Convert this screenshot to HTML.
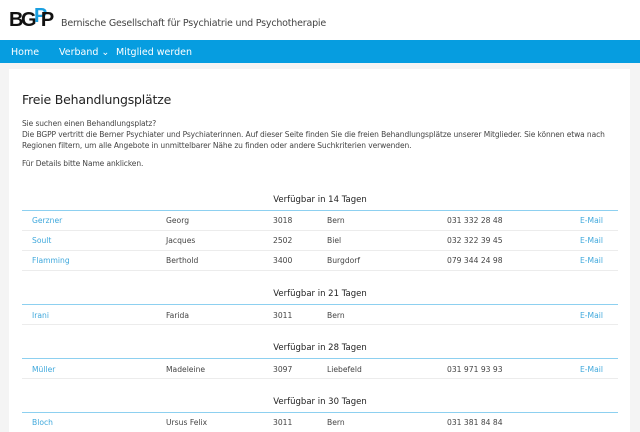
<!DOCTYPE html>
<html><head><meta charset="utf-8"><style>
*{margin:0;padding:0;box-sizing:border-box}
html,body{width:640px;height:432px;overflow:hidden}
body{background:#f4f4f4;font-family:"DejaVu Sans","Liberation Sans",sans-serif;color:#333;position:relative}
.hdr{position:absolute;left:0;top:0;width:640px;height:40px;background:#fff}
.logo{position:absolute;left:9px;top:9px;font:bold 20px "Liberation Sans",sans-serif;letter-spacing:-2.5px;color:#111}
.sub{position:absolute;left:61px;top:18px;font-size:9.5px;color:#444;letter-spacing:-.2px}
.nav{position:absolute;left:0;top:40px;width:640px;height:23px;background:#069de0;color:#fff;font-size:9.5px}
.nav span{position:absolute;top:7px}
.panel{position:absolute;left:9px;top:69px;width:621px;height:363px;background:#fff}
h1{position:absolute;left:22px;top:92px;font-size:12.5px;font-weight:normal;color:#222;letter-spacing:-.2px}
.p{position:absolute;left:22px;font-size:7.5px;color:#444;line-height:11px;letter-spacing:-.1px}
.hd{position:absolute;left:22px;width:596px;text-align:center;font-size:8.5px;color:#222}
.bl{position:absolute;left:22px;width:596px;height:1px;background:#8dd0f0}
.gl{position:absolute;left:22px;width:596px;height:1px;background:#ececec}
.r{position:absolute;font-size:7.6px;color:#444;margin-top:1px}
.l{color:#3fa8dc}
</style></head><body>
<div class="hdr"><div class="logo">BG<span style="color:#1a9fe0;position:relative;top:-4px">P</span><span style="position:relative;left:-4px">P</span></div>
<div class="sub">Bernische Gesellschaft für Psychiatrie und Psychotherapie</div></div>
<div class="nav"><span style="left:11px">Home</span><span style="left:59px">Verband ⌄</span><span style="left:116px">Mitglied werden</span></div>
<div class="panel"></div>
<h1>Freie Behandlungsplätze</h1>
<div class="p" style="top:118px">Sie suchen einen Behandlungsplatz?<br>Die BGPP vertritt die Berner Psychiater und Psychiaterinnen. Auf dieser Seite finden Sie die freien Behandlungsplätze unserer Mitglieder. Sie können etwa nach<br>Regionen filtern, um alle Angebote in unmittelbarer Nähe zu finden oder andere Suchkriterien verwenden.</div>
<div class="p" style="top:158px">Für Details bitte Name anklicken.</div>

<div class="hd" style="top:195px">Verfügbar in 14 Tagen</div><div class="bl" style="top:210px"></div>
<div class="r l" style="left:32px;top:215px">Gerzner</div><div class="r" style="left:166px;top:215px">Georg</div><div class="r" style="left:273px;top:215px">3018</div><div class="r" style="left:327px;top:215px">Bern</div><div class="r" style="left:447px;top:215px">031 332 28 48</div><div class="r l" style="left:580px;top:215px">E-Mail</div>
<div class="gl" style="top:230px"></div>
<div class="r l" style="left:32px;top:235px">Soult</div><div class="r" style="left:166px;top:235px">Jacques</div><div class="r" style="left:273px;top:235px">2502</div><div class="r" style="left:327px;top:235px">Biel</div><div class="r" style="left:447px;top:235px">032 322 39 45</div><div class="r l" style="left:580px;top:235px">E-Mail</div>
<div class="gl" style="top:250px"></div>
<div class="r l" style="left:32px;top:255px">Flamming</div><div class="r" style="left:166px;top:255px">Berthold</div><div class="r" style="left:273px;top:255px">3400</div><div class="r" style="left:327px;top:255px">Burgdorf</div><div class="r" style="left:447px;top:255px">079 344 24 98</div><div class="r l" style="left:580px;top:255px">E-Mail</div>
<div class="gl" style="top:270px"></div>

<div class="hd" style="top:289px">Verfügbar in 21 Tagen</div><div class="bl" style="top:304px"></div>
<div class="r l" style="left:32px;top:310px">Irani</div><div class="r" style="left:166px;top:310px">Farida</div><div class="r" style="left:273px;top:310px">3011</div><div class="r" style="left:327px;top:310px">Bern</div><div class="r l" style="left:580px;top:310px">E-Mail</div>
<div class="gl" style="top:324px"></div>

<div class="hd" style="top:343px">Verfügbar in 28 Tagen</div><div class="bl" style="top:358px"></div>
<div class="r l" style="left:32px;top:364px">Müller</div><div class="r" style="left:166px;top:364px">Madeleine</div><div class="r" style="left:273px;top:364px">3097</div><div class="r" style="left:327px;top:364px">Liebefeld</div><div class="r" style="left:447px;top:364px">031 971 93 93</div><div class="r l" style="left:580px;top:364px">E-Mail</div>
<div class="gl" style="top:378px"></div>

<div class="hd" style="top:397px">Verfügbar in 30 Tagen</div><div class="bl" style="top:412px"></div>
<div class="r l" style="left:32px;top:417px">Bloch</div><div class="r" style="left:166px;top:417px">Ursus Felix</div><div class="r" style="left:273px;top:417px">3011</div><div class="r" style="left:327px;top:417px">Bern</div><div class="r" style="left:447px;top:417px">031 381 84 84</div>
</body></html>
